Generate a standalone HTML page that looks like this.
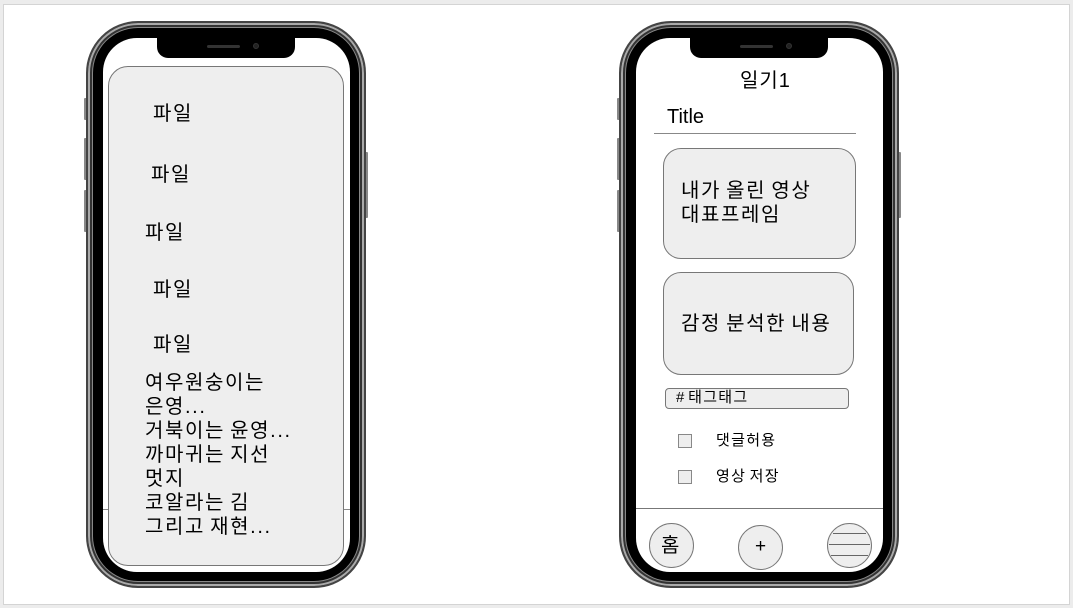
<!DOCTYPE html>
<html><head><meta charset="utf-8"><style>
*{margin:0;padding:0;box-sizing:border-box}
body{width:1073px;height:608px;background:#ececec;position:relative;overflow:hidden;font-family:"Liberation Sans","Noto Sans CJK KR",sans-serif;color:#000}
.frame{position:absolute;left:3px;top:4px;width:1067px;height:601px;background:#fff;border:1px solid #d4d4d4}
.a{position:absolute}
.phone{position:absolute;top:21px;width:280px;height:567px;border-radius:52px;background:#000;border:2px solid #444;box-shadow:inset 0 0 0 2px #aaa,inset 0 0 0 4px #333,inset 0 0 0 5px #888}
.btn{position:absolute;background:#888;width:3px;border-radius:1px}
.screen{position:absolute;top:38px;width:247px;height:534px;border-radius:34px;background:#fff;overflow:hidden}
.notch{position:absolute;top:0;left:54px;width:138px;height:20px;background:#000;border-radius:0 0 11px 11px}
.spk{position:absolute;top:7px;left:50px;width:33px;height:3px;background:#333;border-radius:2px}
.cam{position:absolute;top:5px;left:96px;width:6px;height:6px;background:#222;border-radius:50%;border:1px solid #333}
.t{position:absolute;font-size:20px;line-height:24px;white-space:nowrap;letter-spacing:1.6px;word-spacing:-2px}
.s{font-size:15px;line-height:18px;letter-spacing:1.3px}
.box{position:absolute;background:#eee;border:1px solid #777}
</style></head><body>
<div class="frame"></div>

<div class="btn" style="left:84px;top:98px;height:22px"></div>
<div class="btn" style="left:84px;top:138px;height:42px"></div>
<div class="btn" style="left:84px;top:190px;height:42px"></div>
<div class="btn" style="left:365px;top:152px;height:66px"></div>
<div class="phone" style="left:86px"></div>
<div class="screen" style="left:103px">
  <div class="a" style="left:0;top:471px;width:247px;height:1px;background:#888"></div>
  <div class="box" style="left:5px;top:28px;width:236px;height:500px;border-radius:20px"></div>
  <div class="notch"><div class="spk"></div><div class="cam"></div></div>
</div>
<div class="t" style="left:153px;top:102px">파일</div>
<div class="t" style="left:151px;top:163px">파일</div>
<div class="t" style="left:145px;top:221px">파일</div>
<div class="t" style="left:153px;top:278px">파일</div>
<div class="t" style="left:153px;top:333px">파일</div>
<div class="t" style="left:145px;top:371px">여우원숭이는<br>은영...<br>거북이는 윤영...<br>까마귀는 지선<br>멋지<br>코알라는 김<br>그리고 재현...</div>

<div class="btn" style="left:617px;top:98px;height:22px"></div>
<div class="btn" style="left:617px;top:138px;height:42px"></div>
<div class="btn" style="left:617px;top:190px;height:42px"></div>
<div class="btn" style="left:898px;top:152px;height:66px"></div>
<div class="phone" style="left:619px"></div>
<div class="screen" style="left:636px">
  <div class="notch"><div class="spk"></div><div class="cam"></div></div>
</div>
<div class="t" style="left:740px;top:69px;letter-spacing:1px">일기1</div>
<div class="t" style="left:667px;top:105px;letter-spacing:0">Title</div>
<div class="a" style="left:654px;top:133px;width:202px;height:1px;background:#888"></div>
<div class="box" style="left:663px;top:148px;width:193px;height:111px;border-radius:18px"></div>
<div class="t" style="left:681px;top:179px">내가 올린 영상<br>대표프레임</div>
<div class="box" style="left:663px;top:272px;width:191px;height:103px;border-radius:18px"></div>
<div class="t" style="left:681px;top:312px">감정 분석한 내용</div>
<div class="box" style="left:665px;top:388px;width:184px;height:21px;border-radius:4px"></div>
<div class="t s" style="left:676px;top:389px;word-spacing:-3px">#&nbsp;태그태그</div>
<div class="box" style="left:678px;top:434px;width:14px;height:14px;border-color:#888"></div>
<div class="t s" style="left:716px;top:432px">댓글허용</div>
<div class="box" style="left:678px;top:470px;width:14px;height:14px;border-color:#888"></div>
<div class="t s" style="left:716px;top:468px">영상 저장</div>
<div class="a" style="left:636px;top:508px;width:247px;height:1px;background:#777"></div>
<div class="box" style="left:649px;top:523px;width:45px;height:45px;border-radius:50%"></div>
<div class="t" style="left:661px;top:534px;font-size:20px;letter-spacing:0">홈</div>
<div class="box" style="left:738px;top:525px;width:45px;height:45px;border-radius:50%"></div>
<div class="t" style="left:755px;top:535px;font-size:19px;letter-spacing:0">+</div>
<div class="box" style="left:827px;top:523px;width:45px;height:45px;border-radius:50%"></div>
<div class="a" style="left:833px;top:533px;width:33px;height:1px;background:#666"></div>
<div class="a" style="left:829px;top:544px;width:41px;height:1px;background:#666"></div>
<div class="a" style="left:831px;top:555px;width:37px;height:1px;background:#666"></div>
</body></html>
